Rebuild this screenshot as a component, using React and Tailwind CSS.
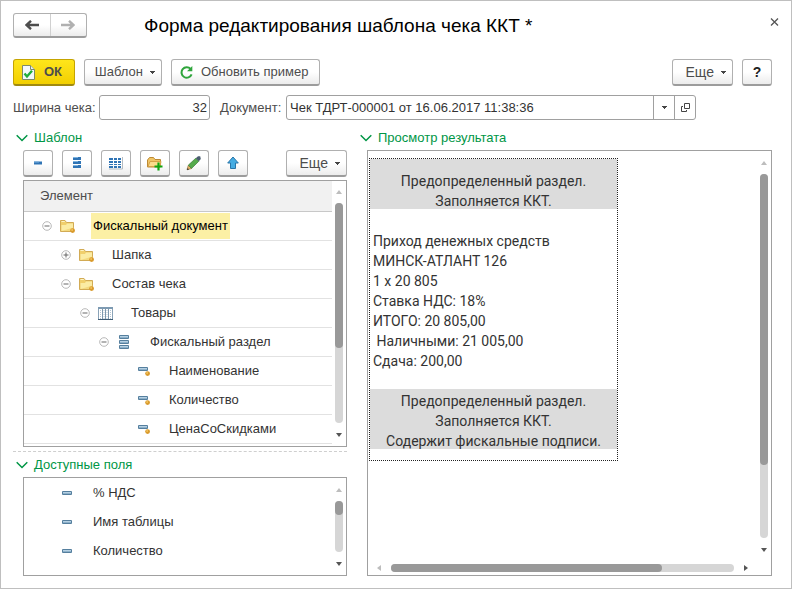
import React, { useState } from "react";

const treeRows = [
  { id: 1, depth: 0, icon: "folder", toggle: "minus", name: "Фискальный документ" },
  { id: 2, depth: 1, icon: "folder", toggle: "plus", name: "Шапка" },
  { id: 3, depth: 1, icon: "folder", toggle: "minus", name: "Состав чека" },
  { id: 4, depth: 2, icon: "table", toggle: "minus", name: "Товары" },
  { id: 5, depth: 3, icon: "stack", toggle: "minus", name: "Фискальный раздел" },
  { id: 6, depth: 4, icon: "attr", name: "Наименование" },
  { id: 7, depth: 4, icon: "attr", name: "Количество" },
  { id: 8, depth: 4, icon: "attr", name: "ЦенаСоСкидками" },
];

const fields = ["% НДС", "Имя таблицы", "Количество", "Наименование"];

const receiptLines = [
  "Приход денежных средств",
  "МИНСК-АТЛАНТ 126",
  "1 x 20 805",
  "Ставка НДС: 18%",
  "ИТОГО: 20 805,00",
  " Наличными: 21 005,00",
  "Сдача: 200,00",
];

const indents = ["pl-[18px]", "pl-[37px]", "pl-[56px]", "pl-[75px]", "pl-[94px]"];

const buttonClass =
  "flex h-[27px] shrink-0 items-center rounded-[3px] border border-[#b0b0b0] border-b-2 border-b-[#9c9c9c] bg-linear-to-b from-white from-50% to-[#ececec] text-[#4d4d4d]";

const Caret = () => (
  <svg width="5" height="3" viewBox="0 0 5 3" shapeRendering="crispEdges">
    <path d="M0 0h5v1H0zM1 1h3v1H1zM2 2h1v1H2z" fill="#444" />
  </svg>
);

const Arrow = ({ dir, dim }) => {
  const paths = {
    up: "M0 6L3 2L6 6z",
    down: "M0 1h6L3 5z",
    left: "M5 0L1 3L5 6z",
    right: "M1 0L5 3L1 6z",
  };
  return (
    <svg width="6" height="6" viewBox="0 0 6 6" className="shrink-0">
      <path d={paths[dir]} fill={dim ? "#bdbdbd" : "#555"} />
    </svg>
  );
};

const FolderShape = () => (
  <>
    <path d="M0.5 13.5V2.5h4.5l1.5 2h7v9z" fill="#f0cf6c" stroke="#d2ab55" />
    <path d="M1.5 13V7H6l1-1.5h6V13z" fill="#fbeca4" />
    <path d="M1.5 13h12V9.5z" fill="#f3d97f" />
    <path d="M1.5 3.5h3.3" stroke="#fdf3c4" />
  </>
);

const Dot = ({ cx, cy }) => (
  <>
    <circle cx={cx} cy={cy} r="2.4" fill="#d99a2b" />
    <circle cx={cx - 0.5} cy={cy - 0.6} r="1" fill="#f0c25c" />
  </>
);

const Bar = ({ x, y, w = 10 }) => (
  <>
    <rect x={x} y={y} width={w} height="4" rx="1" fill="#557f9e" />
    <rect x={x + 1} y={y + 1} width={w - 2} height="1" fill="#b5d0e3" />
    <rect x={x + 1} y={y + 2} width={w - 2} height="1" fill="#8db0c9" />
  </>
);

const RowIcon = ({ type }) => (
  <svg width="16" height="16" viewBox="0 0 16 16" className="shrink-0">
    {type === "folder" && (
      <>
        <FolderShape />
        <Dot cx={12.6} cy={12.6} />
      </>
    )}
    {type === "table" && (
      <>
        <rect x="0.5" y="2.5" width="14" height="12" fill="#fff" stroke="#8aa3b8" />
        <path d="M0 2h15v2H0z" fill="#7d9ab2" />
        <path d="M4.5 3v11M7.5 3v11M10.5 3v11" stroke="#7e99af" />
        <path d="M2.5 5v9M6 5v9M9 5v9M12.5 5v9" stroke="#b4c4d1" strokeDasharray="1 1" />
        <path d="M0 14.5h15" stroke="#3f5c75" />
      </>
    )}
    {type === "stack" && (
      <>
        <Bar x={2} y={1} />
        <Bar x={2} y={6} />
        <Bar x={2} y={11} />
      </>
    )}
    {type === "attr" && (
      <>
        <Bar x={2} y={4} />
        <Dot cx={11.6} cy={10.6} />
      </>
    )}
    {type === "field" && <Bar x={3} y={6} />}
  </svg>
);

const Toggle = ({ type }) => (
  <svg width="10" height="10" viewBox="0 0 10 10" className="shrink-0">
    <circle cx="5" cy="5" r="4.3" fill="#fff" stroke="#b0b0b0" strokeWidth="0.9" />
    <path d="M2.5 4.5h5v1h-5z" fill="#666" />
    {type === "plus" && <path d="M4.5 2.5h1v5h-1z" fill="#666" />}
  </svg>
);

const Section = ({ children }) => (
  <h2 className="flex h-4 shrink-0 items-center gap-[6px] pl-[3px] text-[13px] text-[#009646]">
    <svg width="12" height="8" viewBox="0 0 12 8">
      <path d="M0.7 1.2L6 6.5L11.3 1.2" fill="none" stroke="#009646" strokeWidth="1.5" />
    </svg>
    {children}
  </h2>
);

const MoreButton = () => (
  <button className={buttonClass + " w-[61px] justify-end gap-[7px] pr-[6px]"}>
    <span className="text-sm">Еще</span>
    <Caret />
  </button>
);

const ToolButton = ({ label, children }) => (
  <button aria-label={label} className={buttonClass + " w-[30px] justify-center"}>
    <svg width="16" height="16" viewBox="0 0 16 16">
      {children}
    </svg>
  </button>
);

const ScrollBar = ({ thumb, className }) => (
  <div className={"flex shrink-0 flex-col items-center " + className}>
    <Arrow dir="up" dim />
    <div className="my-[9px] w-2 flex-1 rounded-full bg-[#d6d6d6]">
      <div className="w-2 rounded-full bg-[#999]" style={{ height: thumb + "%" }} />
    </div>
    <Arrow dir="down" />
  </div>
);

const blueBar = "#2f74b5";

const App = () => {
  const [width, setWidth] = useState("32");
  const [doc, setDoc] = useState("Чек ТДРТ-000001 от 16.06.2017 11:38:36");
  const [selected, setSelected] = useState(1);

  return (
    <div className="flex h-screen flex-col border border-[#bfbfbf] bg-white pt-3 pb-3 pl-3 font-['Liberation_Sans',Arial,sans-serif] text-[13px] text-[#333]">
      <header className="flex shrink-0 items-center pr-3">
        <div className="flex h-[25px] w-[74px] rounded-[3px] border border-[#b0b0b0] border-b-2 border-b-[#9c9c9c] bg-linear-to-b from-white from-50% to-[#ececec]">
          <button aria-label="Назад" className="flex flex-1 items-center justify-center border-r border-[#d0d0d0]">
            <svg width="14" height="10" viewBox="0 0 14 10">
              <path d="M14 5H3M6 0.8L1.6 5L6 9.2" fill="none" stroke="#4d4d4d" strokeWidth="2.4" />
            </svg>
          </button>
          <button aria-label="Вперед" className="flex flex-1 items-center justify-center">
            <svg width="14" height="10" viewBox="0 0 14 10">
              <path d="M0 5H11M8 0.8L12.4 5L8 9.2" fill="none" stroke="#b0b0b0" strokeWidth="2.4" />
            </svg>
          </button>
        </div>
        <h1 className="ml-[57px] flex-1 text-[19px] leading-6 text-black">
          Форма редактирования шаблона чека ККТ *
        </h1>
        <button aria-label="Закрыть" className="flex h-4 w-4 items-center justify-end self-start">
          <svg width="9" height="17" viewBox="0 0 9 17">
            <path d="M1 5.5L8 12.5M8 5.5L1 12.5" stroke="#555" strokeWidth="1.3" />
          </svg>
        </button>
      </header>

      <div className="mt-[21px] flex shrink-0 gap-[9px] pr-[19px]">
        <button className="flex h-[27px] w-[62px] items-center gap-[9px] rounded-[3px] border border-[#c5a400] border-b-2 border-b-[#a08a10] bg-linear-to-b from-[#ffe61a] to-[#f2cf00] pl-2 text-[13px] font-bold text-[#4d4d4d]">
          <svg width="13" height="15" viewBox="0 0 13 15">
            <path d="M0.5 0.5h8l4 4v10h-12z" fill="#f4f8fa" stroke="#7d8a6a" />
            <path d="M8.5 0.5v4h4" fill="#e6ecf0" stroke="#7d8a6a" />
            <path d="M2.5 8.5L5 11.5L10 5.8" fill="none" stroke="#22ad3c" strokeWidth="2.4" />
          </svg>
          ОК
        </button>
        <button className={buttonClass + " w-[78px] justify-end gap-[7px] pr-[6px]"}>
          Шаблон
          <Caret />
        </button>
        <button className={buttonClass + " w-[149px] gap-2 pl-2"}>
          <svg width="13" height="13" viewBox="0 0 13 13">
            <path d="M10.6 3A5.2 5.2 0 1 0 11.6 8.4" fill="none" stroke="#2fa53c" strokeWidth="2" />
            <path d="M12.3 0v5.2H7z" fill="#2fa53c" />
          </svg>
          Обновить пример
        </button>
        <div className="flex flex-1 justify-end gap-[9px]">
          <MoreButton />
          <button className={buttonClass + " w-[30px] justify-center text-sm font-bold text-[#222]"}>?</button>
        </div>
      </div>

      <div className="mt-[9px] flex shrink-0 items-center pr-[19px]">
        <label htmlFor="width" className="w-[86px] text-[#4d4d4d]">
          Ширина чека:
        </label>
        <input
          id="width"
          value={width}
          onChange={(e) => setWidth(e.target.value)}
          className="h-[25px] w-[111px] rounded-[3px] border border-[#a0a0a0] px-[2px] text-right outline-none"
        />
        <label htmlFor="doc" className="ml-[10px] w-[66px] text-[#4d4d4d]">
          Документ:
        </label>
        <div className="flex h-[25px] w-[410px] rounded-[3px] border border-[#a0a0a0]">
          <input
            id="doc"
            value={doc}
            onChange={(e) => setDoc(e.target.value)}
            className="min-w-0 flex-1 px-[3px] outline-none"
          />
          <button aria-label="Выбрать" className="flex w-[21px] items-center justify-center border-l border-[#a0a0a0]">
            <Caret />
          </button>
          <button aria-label="Открыть" className="flex w-[21px] items-center justify-center border-l border-[#a0a0a0]">
            <svg width="9" height="9" viewBox="0 0 9 9" fill="none" stroke="#444">
              <path d="M3.5 0.5h5v5h-5zM2 3.5H0.5v5h5V7" />
            </svg>
          </button>
        </div>
      </div>

      <main className="mt-[10px] grid min-h-0 flex-1 grid-cols-[334fr_415fr] gap-[10px] pr-[19px]">
        <div className="flex min-h-0 min-w-0 flex-col">
          <Section>Шаблон</Section>
          <div className="mt-1 ml-[10px] flex shrink-0 gap-[9px]">
            <ToolButton label="Добавить поле">
              <path d="M4 6.5h8v3H4z" fill={blueBar} />
              <path d="M4 6.5h5v1H4z" fill="#7db3e0" />
            </ToolButton>
            <ToolButton label="Добавить раздел">
              <path d="M4 2h8v3H4zM4 6h8v3H4zM4 10h8v3H4z" fill={blueBar} />
              <path d="M4 2h5v1H4zM4 6h5v1H4zM4 10h5v1H4z" fill="#7db3e0" />
            </ToolButton>
            <ToolButton label="Добавить таблицу">
              <path
                d="M1 3h4v2H1zM6 3h3v2H6zM10 3h3v2h-3zM1 6h4v2H1zM6 6h3v2H6zM10 6h3v2h-3zM1 9h4v1H1zM6 9h3v1H6zM10 9h3v1h-3zM1 11h4v2H1zM6 11h3v2H6zM10 11h3v2h-3z"
                fill={blueBar}
              />
              <path d="M14.5 2v12H1" fill="none" stroke="#b5bcc2" />
            </ToolButton>
            <ToolButton label="Добавить папку">
              <path d="M0.5 12V5l2-2.5h4L8 4.5h5.5V12z" fill="#f0c566" stroke="#bd8a34" />
              <path d="M1 11.5L3 6.5h11L13 11.5z" fill="#fbdc8b" stroke="#d5a248" />
              <path d="M11.5 7.5v8M7.5 11.5h8" stroke="#12a512" strokeWidth="2.2" />
            </ToolButton>
            <ToolButton label="Изменить">
              <path d="M1 14.8L2.3 10.3L5.5 13.5z" fill="#e8b468" stroke="#94713c" strokeWidth="0.7" />
              <path d="M2.4 10.1L9.8 3.2L12.8 6.3L5.5 13.4z" fill="#55ab4c" stroke="#397a35" strokeWidth="0.7" />
              <path d="M9.8 3.2L12 1.2h2.2L14.8 4L12.8 6.3z" fill="#4a5c70" />
              <path d="M1 15l0.6-2L3 14.4z" fill="#333" />
            </ToolButton>
            <ToolButton label="Переместить вверх">
              <path d="M8 2L13.3 8H10.5V13.5H5.5V8H2.7z" fill="#45ace2" stroke="#2875a8" />
            </ToolButton>
            <div className="flex flex-1 justify-end">
              <MoreButton />
            </div>
          </div>

          <div className="mt-[3px] ml-[10px] flex min-h-0 flex-1 border border-[#a0a0a0]">
            <div className="min-w-0 flex-1 overflow-hidden">
              <table className="w-full border-collapse">
                <thead>
                  <tr className="h-[30px] border-b border-[#c8c8c8] bg-[#f1f1f1]">
                    <th className="pl-4 text-left font-normal text-[#4d4d4d]">Элемент</th>
                  </tr>
                </thead>
                <tbody>
                  {treeRows.map((row) => (
                    <tr key={row.id} className="h-[29px] border-b border-[#e2e2e2]" onClick={() => setSelected(row.id)}>
                      <td className="p-0">
                        <div className={"flex h-7 items-center " + indents[row.depth]}>
                          {row.toggle ? <Toggle type={row.toggle} /> : <span className="w-[10px]" />}
                          <span className="ml-2 flex">
                            <RowIcon type={row.icon} />
                          </span>
                          <span
                            className={
                              "ml-[15px] px-[2px] leading-[26px] " +
                              (selected === row.id ? "bg-[#fcf0a5] text-black" : "")
                            }
                          >
                            {row.name}
                          </span>
                        </div>
                      </td>
                    </tr>
                  ))}
                </tbody>
              </table>
            </div>
            <ScrollBar thumb={66} className="w-[14px] pt-[7px] pb-2" />
          </div>

          <div className="mt-1 shrink-0 border-t border-dashed border-[#cfcfcf]" />
          <div className="mt-[5px] shrink-0">
            <Section>Доступные поля</Section>
          </div>
          <div className="mt-1 ml-[10px] flex h-[99px] shrink-0 border border-[#a0a0a0]">
            <ul className="flex-1 overflow-hidden">
              {fields.map((f) => (
                <li key={f} className="flex h-[29px] items-center gap-[18px] pl-[35px]">
                  <RowIcon type="field" />
                  {f}
                </li>
              ))}
            </ul>
            <ScrollBar thumb={28} className="w-[14px] pt-2 pb-2" />
          </div>
        </div>

        <div className="flex min-h-0 min-w-0 flex-col">
          <Section>Просмотр результата</Section>
          <div className="mt-1 ml-[10px] flex min-h-0 flex-1 flex-col border border-[#a0a0a0]">
            <div className="flex min-h-0 flex-1">
              <div className="min-w-0 flex-1 overflow-hidden pt-[7px] pl-px">
                <div className="w-[249px] border border-dotted border-[#222] pb-[11px] font-[Roboto,sans-serif] text-sm leading-5">
                  <div className="h-[50px] bg-[#dcdcdc] pt-3 text-center">
                    <p>Предопределенный раздел.</p>
                    <p>Заполняется ККТ.</p>
                  </div>
                  <div className="mt-[22px] pl-[3px] whitespace-pre">
                    {receiptLines.map((line) => (
                      <p key={line}>{line}</p>
                    ))}
                  </div>
                  <div className="mt-[18px] h-[60px] bg-[#dcdcdc] pt-[2px] text-center">
                    <p>Предопределенный раздел.</p>
                    <p>Заполняется ККТ.</p>
                    <p>Содержит фискальные подписи.</p>
                  </div>
                </div>
              </div>
              <ScrollBar thumb={80} className="w-[14px] pt-2" />
            </div>
            <div className="flex h-[22px] shrink-0 items-center gap-[9px] pt-2 pr-[22px] pl-2">
              <Arrow dir="left" dim />
              <div className="h-2 flex-1 rounded-full bg-[#d6d6d6]">
                <div className="h-2 w-[79%] rounded-full bg-[#999]" />
              </div>
              <Arrow dir="right" />
            </div>
          </div>
        </div>
      </main>
    </div>
  );
};

export default App;
